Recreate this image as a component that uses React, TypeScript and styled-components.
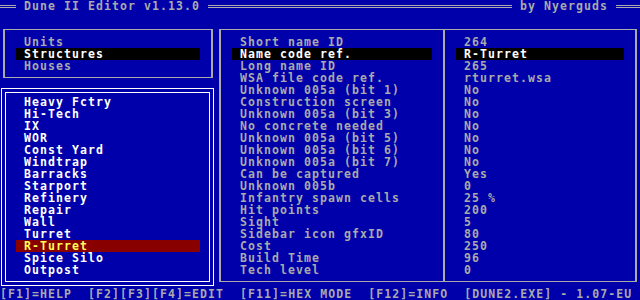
import React from "react";
import styled, { createGlobalStyle } from "styled-components";

const GlobalStyle = createGlobalStyle`
  html, body {
    margin: 0;
    padding: 0;
    background: #0000aa;
  }
`;

const Screen = styled.div`
  width: 640px;
  height: 300px;
  overflow: hidden;
  display: flex;
  flex-direction: column;
  background: #0000aa;
  color: #aaaaaa;
  font-family: "DejaVu Sans Mono", "Liberation Mono", monospace;
  font-size: 11.5px;
  font-weight: bold;
  letter-spacing: 1.08px;
  line-height: 12px;
  white-space: pre;
`;

const TitleBar = styled.div`
  display: flex;
  height: 12px;
  gap: 8px;
`;

const Rule = styled.div<{ $w?: number }>`
  flex: ${(p) => (p.$w ? `0 0 ${p.$w}px` : "1 1 auto")};
  height: 1px;
  margin-top: 5px;
  border-top: 1px solid #aaaaaa;
  border-bottom: 1px solid #aaaaaa;
`;

const Title = styled.span``;

const Body = styled.div`
  display: flex;
  height: 264px;
  margin-top: 12px;
`;

const LeftCol = styled.div`
  display: flex;
  flex-direction: column;
  width: 216px;
  flex: 0 0 216px;
`;

const CategoryBox = styled.div`
  box-sizing: border-box;
  width: 210px;
  height: 49px;
  margin: 5px 0 0 3px;
  padding: 6px 0 0 11px;
  border: 1px solid #aaaaaa;
  border-left-width: 2px;
  border-right-width: 2px;
`;

const MenuItem = styled.div<{ $selected?: boolean }>`
  width: 184px;
  height: 12px;
  padding-left: 8px;
  box-sizing: border-box;
  color: ${(p) => (p.$selected ? "#ffffff" : "#aaaaaa")};
  background: ${(p) => (p.$selected ? "#000000" : "transparent")};
`;

const DoubleFrame = styled.div`
  box-sizing: border-box;
  width: 213px;
  height: 198px;
  margin: 10px 0 0 1px;
  padding: 3px;
  border: 1px solid #ffffff;
`;

const DoubleInner = styled.div`
  box-sizing: border-box;
  height: 100%;
  padding: 3px 0 0 10px;
  border: 1px solid #ffffff;
`;

const StructItem = styled.div<{ $selected?: boolean }>`
  width: 184px;
  height: 12px;
  padding-left: 8px;
  box-sizing: border-box;
  color: ${(p) => (p.$selected ? "#ffff55" : "#ffffff")};
  background: ${(p) => (p.$selected ? "#880000" : "transparent")};
`;

const DataBox = styled.div`
  box-sizing: border-box;
  display: flex;
  width: 418px;
  height: 253px;
  margin: 5px 0 0 3px;
  border: 1px solid #aaaaaa;
  border-left-width: 2px;
  border-right-width: 2px;
`;

const Pane = styled.div<{ $w: number; $divider?: boolean }>`
  box-sizing: border-box;
  flex: 0 0 ${(p) => p.$w}px;
  padding: 6px 0 0 11px;
  border-left: ${(p) => (p.$divider ? "2px solid #aaaaaa" : "none")};
`;

const Field = styled.div<{ $selected?: boolean; $w: number }>`
  width: ${(p) => p.$w}px;
  height: 12px;
  padding-left: 8px;
  box-sizing: border-box;
  color: ${(p) => (p.$selected ? "#ffffff" : "#aaaaaa")};
  background: ${(p) => (p.$selected ? "#000000" : "transparent")};
`;

const Footer = styled.div`
  height: 12px;
`;

const categories = ["Units", "Structures", "Houses"];

const structures = [
  "Heavy Fctry",
  "Hi-Tech",
  "IX",
  "WOR",
  "Const Yard",
  "Windtrap",
  "Barracks",
  "Starport",
  "Refinery",
  "Repair",
  "Wall",
  "Turret",
  "R-Turret",
  "Spice Silo",
  "Outpost",
];

const fields: [string, string][] = [
  ["Short name ID", "264"],
  ["Name code ref.", "R-Turret"],
  ["Long name ID", "265"],
  ["WSA file code ref.", "rturret.wsa"],
  ["Unknown 005a (bit 1)", "No"],
  ["Construction screen", "No"],
  ["Unknown 005a (bit 3)", "No"],
  ["No concrete needed", "No"],
  ["Unknown 005a (bit 5)", "No"],
  ["Unknown 005a (bit 6)", "No"],
  ["Unknown 005a (bit 7)", "No"],
  ["Can be captured", "Yes"],
  ["Unknown 005b", "0"],
  ["Infantry spawn cells", "25 %"],
  ["Hit points", "200"],
  ["Sight", "5"],
  ["Sidebar icon gfxID", "80"],
  ["Cost", "250"],
  ["Build Time", "96"],
  ["Tech level", "0"],
];

const selectedField = 1;

export default function App() {
  return (
    <>
      <GlobalStyle />
      <Screen>
        <TitleBar>
          <Rule $w={16} />
          <Title>Dune II Editor v1.13.0</Title>
          <Rule />
          <Title>by Nyerguds</Title>
          <Rule $w={24} />
        </TitleBar>
        <Body>
          <LeftCol>
            <CategoryBox>
              {categories.map((c) => (
                <MenuItem key={c} $selected={c === "Structures"}>
                  {c}
                </MenuItem>
              ))}
            </CategoryBox>
            <DoubleFrame>
              <DoubleInner>
                {structures.map((s) => (
                  <StructItem key={s} $selected={s === "R-Turret"}>
                    {s}
                  </StructItem>
                ))}
              </DoubleInner>
            </DoubleFrame>
          </LeftCol>
          <DataBox>
            <Pane $w={222}>
              {fields.map(([label], i) => (
                <Field key={label} $w={200} $selected={i === selectedField}>
                  {label}
                </Field>
              ))}
            </Pane>
            <Pane $w={192} $divider>
              {fields.map(([label, value], i) => (
                <Field key={label} $w={168} $selected={i === selectedField}>
                  {value}
                </Field>
              ))}
            </Pane>
          </DataBox>
        </Body>
        <Footer>
          {"[F1]=HELP  [F2][F3][F4]=EDIT  [F11]=HEX MODE  [F12]=INFO  [DUNE2.EXE] - 1.07-EU"}
        </Footer>
      </Screen>
    </>
  );
}
